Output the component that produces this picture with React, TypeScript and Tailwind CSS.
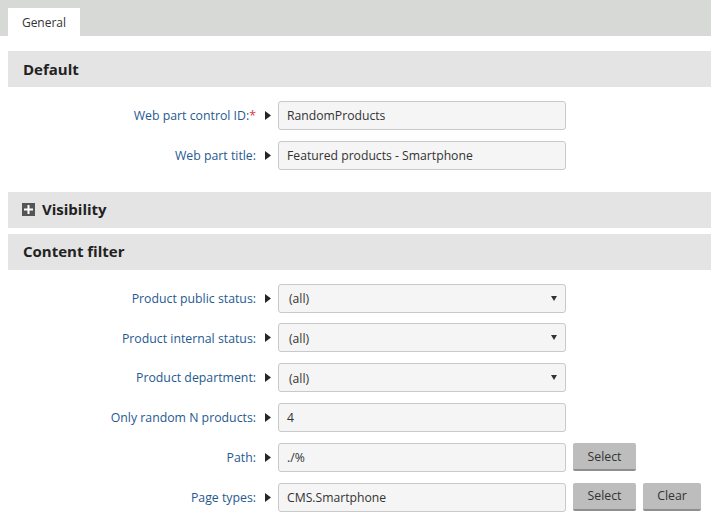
import React from "react";

const font = { fontFamily: '"Open Sans", "Noto Sans", Arial, sans-serif' };

function Arrow() {
  return (
    <svg width="6" height="9" viewBox="0 0 6 9" className="shrink-0">
      <path d="M0 0 L6 4.5 L0 9 Z" fill="#262626" />
    </svg>
  );
}

function Row({ label, required, children }: { label: string; required?: boolean; children: React.ReactNode }) {
  return (
    <div className="flex items-center h-[29px] mb-[10.8px]">
      <div className="w-[249px] text-right text-[12.3px] text-[#1f5a91] pr-[1px] pt-[2px]">
        {label}
        {required && <span className="text-[#e0383e]">*</span>}
      </div>
      <div className="w-[21px] flex justify-center">
        <Arrow />
      </div>
      {children}
    </div>
  );
}

function Input({ value }: { value: string }) {
  return (
    <div className="w-[288px] h-[29px] border border-[#c9c9c9] rounded-[3px] bg-[#f5f5f5] px-[8px] pt-[2px] flex items-center text-[12.2px] text-[#333]">
      {value}
    </div>
  );
}

function Select({ value }: { value: string }) {
  return (
    <div className="w-[288px] h-[29px] border border-[#c9c9c9] rounded-[3px] bg-[#f5f5f5] pl-[10px] pr-[8px] flex items-center justify-between text-[12.2px] text-[#333]">
      <span className="pt-[2px]">{value}</span>
      <svg width="6" height="5" viewBox="0 0 6 5">
        <path d="M0 0 L6 0 L3 5 Z" fill="#333" />
      </svg>
    </div>
  );
}

function Btn({ children, w }: { children: React.ReactNode; w: string }) {
  return (
    <div className={`${w} ml-[7px] h-[28px] bg-[#bdbdbd] border-b-2 border-[#8f8f8f] rounded-[2px] pt-[1px] flex items-center justify-center text-[12.3px] text-[#333]`}>
      {children}
    </div>
  );
}

function Header({ children }: { children: React.ReactNode }) {
  return (
    <div className="h-[36px] bg-[#e4e4e4] flex items-center pl-[15px] text-[15px] font-bold text-[#222]">
      {children}
    </div>
  );
}

export default function App() {
  return (
    <div className="w-[711px] h-[520px] bg-white overflow-hidden" style={font}>
      <div className="h-[36px] bg-[#d7d9d6] flex items-end pl-[8px]">
        <div className="w-[72px] h-[28px] bg-white flex items-center justify-center pt-[1px] text-[12px] text-[#333]">General</div>
      </div>
      <div className="pl-[8px] pt-[15px]">
        <Header>Default</Header>
        <div className="pt-[14px] pb-[11px]">
          <Row label="Web part control ID:" required>
            <Input value="RandomProducts" />
          </Row>
          <Row label="Web part title:">
            <Input value="Featured products - Smartphone" />
          </Row>
        </div>
        <Header>
          <span className="w-[13px] h-[13px] shrink-0 bg-[#555] flex items-center justify-center -ml-[1px] mr-[7px]">
            <svg width="9" height="9" viewBox="0 0 9 9">
              <path d="M3.5 0 H5.5 V3.5 H9 V5.5 H5.5 V9 H3.5 V5.5 H0 V3.5 H3.5 Z" fill="#fff" />
            </svg>
          </span>
          Visibility
        </Header>
        <div className="h-[6px]" />
        <Header>Content filter</Header>
        <div className="pt-[14px]">
          <Row label="Product public status:">
            <Select value="(all)" />
          </Row>
          <Row label="Product internal status:">
            <Select value="(all)" />
          </Row>
          <Row label="Product department:">
            <Select value="(all)" />
          </Row>
          <Row label="Only random N products:">
            <Input value="4" />
          </Row>
          <Row label="Path:">
            <Input value="./%" />
            <Btn w="w-[63px]">Select</Btn>
          </Row>
          <Row label="Page types:">
            <Input value="CMS.Smartphone" />
            <Btn w="w-[63px]">Select</Btn>
            <Btn w="w-[58px]">Clear</Btn>
          </Row>
        </div>
      </div>
    </div>
  );
}
